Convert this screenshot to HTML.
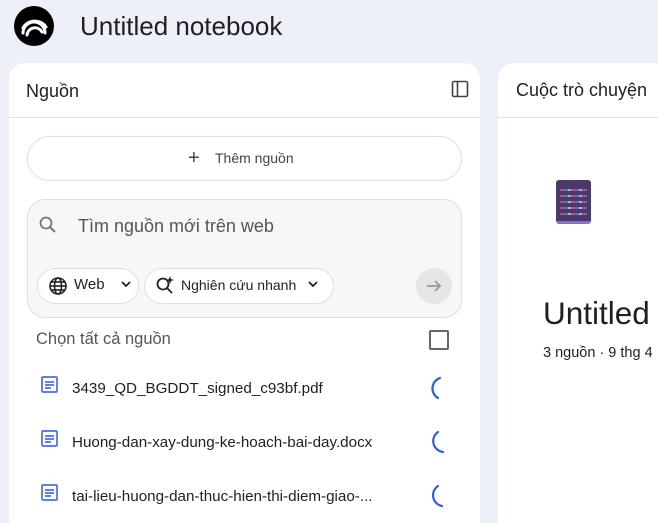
<!DOCTYPE html>
<html><head><meta charset="utf-8"><style>
*{box-sizing:border-box;margin:0;padding:0}
body{width:658px;height:516px;overflow:hidden;background:#eef0f9;font-family:"Liberation Sans","Noto Sans CJK SC",sans-serif;color:#1f1f1f;position:relative}
.abs{position:absolute}
.panel{position:absolute;background:#fff;border-radius:16px 16px 0 0}
</style></head><body>
<div class="abs" style="left:14px;top:6px;width:40px;height:40px;border-radius:50%;background:#000">
<svg width="40" height="40" viewBox="0 0 40 40"><g fill="none" stroke="#fff" stroke-width="3" stroke-linecap="round"><path d="M9 27 A11 11 0 0 1 31 27"/><path d="M13 29 A8 8 0 0 1 28 26" /><path d="M9 22 A13 12 0 0 1 32 21"/></g></svg>
</div>
<div class="abs" style="left:80px;top:11px;font-size:26px;color:#1f1f1f">Untitled notebook</div>

<div class="panel" style="left:9px;top:63px;width:471px;height:460px">
  <div class="abs" style="left:17px;top:18px;font-size:18px">Nguồn</div>
  <svg class="abs" style="left:442px;top:17px" width="18" height="18" viewBox="0 0 18 18"><rect x="1.5" y="1.5" width="15" height="15" rx="1.5" fill="none" stroke="#444" stroke-width="1.6"/><line x1="6.5" y1="2" x2="6.5" y2="16" stroke="#444" stroke-width="1.6"/></svg>
  <div class="abs" style="left:0;top:54px;width:471px;height:1px;background:#dfe1ea"></div>
  <div class="abs" style="left:18px;top:73px;width:435px;height:45px;border:1px solid #dcdfe8;border-radius:23px"></div>
  <div class="abs" style="left:179px;top:84px;font-size:20px;color:#444">+</div>
  <div class="abs" style="left:206px;top:87px;font-size:14px;color:#444">Thêm nguồn</div>
  <div class="abs" style="left:18px;top:136px;width:435px;height:119px;border:1px solid #dcdfe8;border-radius:18px;background:#f7f7f8"></div>
  <svg class="abs" style="left:29px;top:152px" width="20" height="20" viewBox="0 0 20 20"><circle cx="8" cy="8" r="5.5" fill="none" stroke="#777" stroke-width="1.8"/><line x1="12" y1="12" x2="17" y2="17" stroke="#777" stroke-width="2"/></svg>
  <div class="abs" style="left:69px;top:153px;font-size:18px;color:#555">Tìm nguồn mới trên web</div>
  <div class="abs" style="left:28px;top:205px;width:102px;height:36px;border:1px solid #dcdfe8;border-radius:18px;background:#fff"></div>
  <svg class="abs" style="left:39px;top:213px" width="20" height="20" viewBox="0 0 20 20"><g fill="none" stroke="#222" stroke-width="1.6"><circle cx="10" cy="10" r="8"/><ellipse cx="10" cy="10" rx="3.5" ry="8"/><line x1="2" y1="10" x2="18" y2="10"/><line x1="3" y1="6" x2="17" y2="6"/><line x1="3" y1="14" x2="17" y2="14"/></g></svg>
  <div class="abs" style="left:65px;top:213px;font-size:15px;color:#222">Web</div>
  <svg class="abs" style="left:111px;top:215px" width="12" height="12" viewBox="0 0 12 12"><path d="M2 4 L6 8 L10 4" fill="none" stroke="#222" stroke-width="1.8"/></svg>
  <div class="abs" style="left:135px;top:205px;width:190px;height:36px;border:1px solid #dcdfe8;border-radius:18px;background:#fff"></div>
  <svg class="abs" style="left:146px;top:211px" width="22" height="22" viewBox="0 0 22 22"><g fill="none" stroke="#222" stroke-width="1.8"><circle cx="8" cy="10" r="5.5"/><line x1="12" y1="14" x2="17" y2="19"/></g><path d="M15 2 L16 5 L19 6 L16 7 L15 10 L14 7 L11 6 L14 5Z" fill="#222"/></svg>
  <div class="abs" style="left:172px;top:214px;font-size:14px;color:#222">Nghiên cứu nhanh</div>
  <svg class="abs" style="left:298px;top:215px" width="12" height="12" viewBox="0 0 12 12"><path d="M2 4 L6 8 L10 4" fill="none" stroke="#222" stroke-width="1.8"/></svg>
  <div class="abs" style="left:407px;top:205px;width:36px;height:36px;border-radius:50%;background:#e6e6e8"></div>
  <svg class="abs" style="left:415px;top:213px" width="20" height="20" viewBox="0 0 20 20"><path d="M3 10 H16 M11 5 L16 10 L11 15" fill="none" stroke="#999" stroke-width="1.8"/></svg>
  <div class="abs" style="left:27px;top:267px;font-size:16.5px;color:#555">Chọn tất cả nguồn</div>
  <div class="abs" style="left:420px;top:267px;width:20px;height:20px;border:2px solid #666;border-radius:2px"></div>
  <div class="abs" style="left:63px;top:317px;font-size:15.2px">3439_QD_BGDDT_signed_c93bf.pdf</div>
  <div class="abs" style="left:63px;top:371px;font-size:15.2px">Huong-dan-xay-dung-ke-hoach-bai-day.docx</div>
  <div class="abs" style="left:63px;top:425px;font-size:15.2px">tai-lieu-huong-dan-thuc-hien-thi-diem-giao-...</div>
</div>
<svg class="abs" style="left:40px;top:376px" width="20" height="140" viewBox="0 0 20 140">
<g fill="none" stroke="#4a6ee0" stroke-width="1.7"><rect x="2" y="1" width="15" height="15" rx="1"/><path d="M5 6H14M5 9H14M5 12H11"/>
<rect x="2" y="55" width="15" height="15" rx="1"/><path d="M5 60H14M5 63H14M5 66H11"/>
<rect x="2" y="109" width="15" height="15" rx="1"/><path d="M5 114H14M5 117H14M5 120H11"/></g></svg>
<svg class="abs" style="left:424px;top:374px" width="30" height="142" viewBox="0 0 30 142">
<g fill="none" stroke="#2f5fd8" stroke-width="2.2" stroke-linecap="round"><path d="M16 4 A11 11 0 0 0 14 24"/><path d="M14 58 A11 11 0 0 0 19 78"/><path d="M14 112 A11 11 0 0 0 18 132"/></g></svg>

<div class="panel" style="left:498px;top:63px;width:180px;height:460px">
  <div class="abs" style="left:18px;top:17px;font-size:18px;white-space:nowrap">Cuộc trò chuyện</div>
  <div class="abs" style="left:0;top:54px;width:180px;height:1px;background:#dfe1ea"></div>
  <div class="abs" style="left:58px;top:117px;width:35px;height:44px;background:#4a3a6a;border-radius:3px;border-bottom:3px solid #8a70c8">
   <div style="margin:5px 4px;height:30px;background:repeating-linear-gradient(90deg,#e05aa0 0 4px,#5a8ae0 4px 8px,#ddd 8px 11px);opacity:.7;-webkit-mask:repeating-linear-gradient(0deg,#000 0 2px,transparent 2px 6px)"></div>
  </div>
  <div class="abs" style="left:45px;top:232px;font-size:31.5px;white-space:nowrap">Untitled</div>
  <div class="abs" style="left:45px;top:282px;font-size:14.5px;white-space:nowrap">3 nguồn · 9 thg 4</div>
</div>
</body></html>
